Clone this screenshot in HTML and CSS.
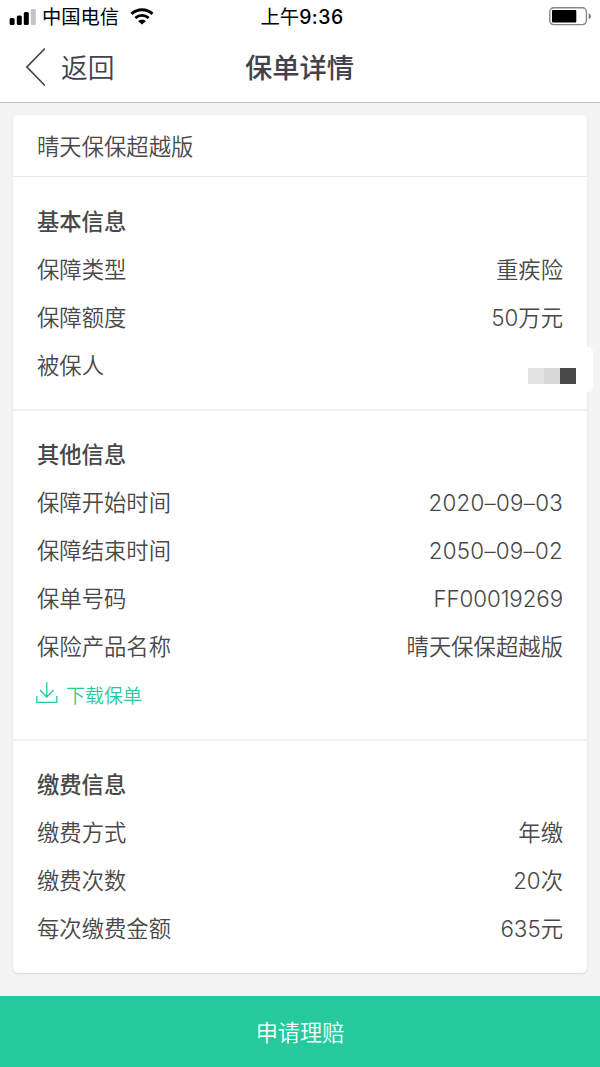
FILE: index.html
```html
<!DOCTYPE html>
<html lang="zh-CN">
  <head>
    <meta charset="UTF-8" />
    <meta name="viewport" content="width=device-width, initial-scale=1.0" />
    <title>保单详情</title>
    <link rel="stylesheet" href="styles.css">
  </head>
  <body>
    <div class="status-bar">
      <div class="status-left">
        <svg class="signal" width="27" height="16" viewBox="0 0 27 16">
          <rect x="0.6" y="9" width="5" height="7" rx="1.5" />
          <rect x="7.8" y="6.5" width="5" height="9.5" rx="1.5" />
          <rect x="14.8" y="3" width="5" height="13" rx="1.5" />
          <rect x="21.8" y="0" width="5" height="16" rx="1.2" fill="#c4c4c4" />
        </svg>
        <span class="carrier">中国电信</span>
        <svg class="wifi" width="24" height="17" viewBox="0 0 24 17">
          <path d="M1.5 5.8C7.5.3 16.5.3 22.5 5.8" fill="none" stroke="#000" stroke-width="3" />
          <path d="M5.3 10C9.2 6.5 14.8 6.5 18.7 10" fill="none" stroke="#000" stroke-width="2.8" />
          <path d="M8 12.9Q12 9.9 16 12.9L12 16.6Z" />
        </svg>
      </div>
      <div class="time">上午<i class="clock">9:36</i></div>
      <svg class="battery" width="43" height="19" viewBox="0 0 43 19">
        <rect x=".8" y=".8" width="36.6" height="16.8" rx="4" fill="#fff" stroke="#888" stroke-width="1.4" />
        <rect x="3" y="3" width="24.3" height="12.4" rx="1" />
        <path d="M39.7 6.2Q42 7 42 9.2T39.7 12.2Z" fill="#777" />
      </svg>
    </div>

    <header class="nav">
      <a class="back">
        <svg width="20" height="40" viewBox="0 0 20 40">
          <path d="M19.9 1.5L1.9 20L19.9 38.5" fill="none" stroke="#42424c" stroke-width="1.7" />
        </svg>
        <span>返回</span>
      </a>
      <h1>保单详情</h1>
    </header>

    <main class="card">
      <div class="product">晴天保保超越版</div>

      <section class="section">
        <h2>基本信息</h2>
        <div class="row"><span>保障类型</span><span>重疾险</span></div>
        <div class="row"><span>保障额度</span><span><i class="num">50</i>万元</span></div>
        <div class="row insured">
          <span>被保人</span>
          <div class="mask"><b></b><b></b><b></b></div>
        </div>
      </section>

      <section class="section">
        <h2>其他信息</h2>
        <div class="row"><span>保障开始时间</span><i class="num date">2020–09–03</i></div>
        <div class="row"><span>保障结束时间</span><i class="num date">2050–09–02</i></div>
        <div class="row"><span>保单号码</span><i class="num policy">FF00019269</i></div>
        <div class="row"><span>保险产品名称</span><span>晴天保保超越版</span></div>
        <a class="download">
          <svg width="22" height="22" viewBox="0 0 22 22">
            <path d="M.8 14V20.3H20.8V14M10.8 .3V15M4 8L10.8 15L17.6 8" fill="none" stroke="#26c99e" stroke-width="1.3" />
          </svg>
          <span>下载保单</span>
        </a>
      </section>

      <section class="section">
        <h2>缴费信息</h2>
        <div class="row"><span>缴费方式</span><span>年缴</span></div>
        <div class="row"><span>缴费次数</span><span><i class="num">20</i>次</span></div>
        <div class="row"><span>每次缴费金额</span><span><i class="num">635</i>元</span></div>
      </section>
    </main>

    <button class="claim">申请理赔</button>
  </body>
</html>
```

FILE: styles.css
```css
* {
  box-sizing: border-box;
}

body {
  margin: 0;
  height: 1067px;
  display: flex;
  flex-direction: column;
  background: #f4f4f4;
  color: #484848;
  font-family: "Noto Sans CJK SC", sans-serif;
  font-size: 22.35px;
  font-weight: 350;
  overflow: hidden;
}

.status-bar {
  height: 33px;
  padding: 0 8px 1px 9px;
  display: grid;
  grid-template-columns: 1fr auto 1fr;
  align-items: center;
  background: #fff;
  color: #000;
}

.status-left {
  display: flex;
  align-items: center;
}

.carrier {
  margin: 0 11px 0 6px;
  padding-bottom: 1px;
  font-size: 19.3px;
  font-weight: 400;
  line-height: 31px;
}

.time {
  margin-left: 3px;
  font-size: 19.4px;
  font-weight: 400;
  line-height: 32px;
}

.clock {
  font-family: Inter, "Liberation Sans", sans-serif;
  font-style: normal;
  font-weight: 500;
  letter-spacing: 0.5px;
}

.battery {
  justify-self: end;
}

.nav {
  height: 70px;
  padding: 0 0 2px 25px;
  display: grid;
  grid-template-columns: 1fr auto 1fr;
  align-items: center;
  background: #fff;
  border-bottom: 1px solid #c2c2c2;
  color: #42424c;
}

.back {
  display: flex;
  align-items: center;
  gap: 16px;
  font-size: 26.8px;
  line-height: 67px;
}

.nav h1 {
  margin: 0 26px 0 0;
  font-size: 27.3px;
  font-weight: 500;
  line-height: 67px;
}

.card {
  margin: 12px 13px 0;
  background: #fff;
  border-radius: 5px;
  box-shadow: 0 1px 2px rgba(0, 0, 0, 0.12);
}

.product {
  height: 61px;
  padding: 0 24px;
  line-height: 60px;
}

.section {
  padding: 19px 24px 21px;
  border-top: 1px solid #e8e8e8;
}

.section + .section {
  padding: 18px 24px 22px;
  border-top: 2px solid #f0f0f0;
}

.section h2 {
  margin: 0;
  font-size: 22.3px;
  font-weight: 500;
  line-height: 48px;
}

.row {
  height: 48px;
  display: flex;
  justify-content: space-between;
  line-height: 48px;
}

.num {
  font-family: Inter, "Liberation Sans", sans-serif;
  font-style: normal;
}

.date,
.policy {
  padding-top: 2px;
}

.date {
  letter-spacing: 0.25px;
}

.policy {
  letter-spacing: -0.1px;
}

.insured {
  margin-right: -30px;
}

.mask {
  height: 45px;
  margin-top: 7px;
  padding: 21px 17px 8px;
  display: flex;
  background: #fff;
  border-radius: 5px;
}

.mask b {
  width: 16px;
  background: #e3e3e3;
}

.mask b:nth-child(2) {
  background: #d7d7d7;
}

.mask b:nth-child(3) {
  background: #484848;
}

.download {
  height: 48px;
  display: flex;
  align-items: center;
  gap: 8px;
  color: #26c99e;
  font-size: 19px;
}

.download svg {
  margin-left: -1px;
}

.download span {
  padding-top: 2px;
}

.claim {
  height: 71px;
  margin-top: auto;
  padding: 0 0 2px;
  border: none;
  background: #26c99e;
  color: #fff;
  font-family: inherit;
  font-size: 22.2px;
  font-weight: 350;
}
```
